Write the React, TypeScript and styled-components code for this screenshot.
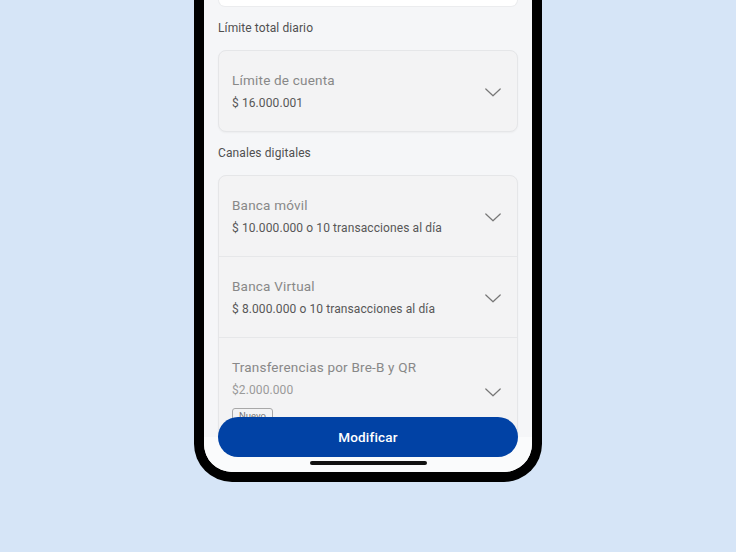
import React from "react";
import styled, { createGlobalStyle } from "styled-components";

const Global = createGlobalStyle`
  html, body { margin: 0; padding: 0; }
  body {
    background: #d6e5f7;
    font-family: Roboto, "Noto Sans", "Liberation Sans", sans-serif;
    width: 736px;
    height: 552px;
    overflow: hidden;
  }
`;

const Stage = styled.div`
  width: 736px;
  height: 552px;
  display: flex;
  justify-content: center;
  align-items: flex-start;
`;

const Phone = styled.div`
  width: 348px;
  height: 482px;
  box-sizing: border-box;
  background: #000;
  border: 10px solid #000;
  border-top: none;
  border-radius: 0 0 38px 38px;
`;

const Screen = styled.div`
  position: relative;
  width: 100%;
  height: 100%;
  background: #f5f6f8;
  border-radius: 0 0 28px 28px;
  overflow: hidden;
`;

const Content = styled.div`
  display: flex;
  flex-direction: column;
  padding: 0 14px;
`;

const TopStub = styled.div`
  height: 7px;
  background: #ffffff;
  border: 1px solid #ebecee;
  border-top: none;
  border-radius: 0 0 8px 8px;
  box-sizing: border-box;
`;

const SectionLabel = styled.div`
  font-size: 12px;
  line-height: 16px;
  color: #505050;
  margin: 13px 0 14px;
  letter-spacing: 0.1px;
`;

const Card = styled.div`
  background: #f3f3f4;
  border: 1px solid #e5e6e8;
  border-radius: 8px;
  box-shadow: 0 1px 2px rgba(0, 0, 0, 0.04);
  display: flex;
  flex-direction: column;
`;

const Row = styled.div<{ $last?: boolean }>`
  display: flex;
  align-items: center;
  justify-content: space-between;
  padding: 19px 16px 19px 13px;
  border-bottom: ${(p) => (p.$last ? "none" : "1px solid #e6e7e9")};
`;

const RowText = styled.div`
  display: flex;
  flex-direction: column;
  gap: 4px;
`;

const Title = styled.div`
  font-size: 13.5px;
  line-height: 20px;
  color: #888888;
  letter-spacing: 0.2px;
`;

const Value = styled.div<{ $muted?: boolean }>`
  font-size: 12px;
  line-height: 18px;
  color: ${(p) => (p.$muted ? "#9a9a9a" : "#575757")};
  letter-spacing: 0.1px;
`;

const Badge = styled.span`
  align-self: flex-start;
  margin-top: 5px;
  font-size: 9.5px;
  line-height: 12px;
  color: #777;
  border: 1px solid #a8a8a8;
  border-radius: 3px;
  padding: 1px 6px;
`;

const ChevronWrap = styled.div`
  display: flex;
  width: 16px;
  height: 9px;
  margin-top: 3px;
`;

const Footer = styled.div`
  position: absolute;
  left: 0;
  right: 0;
  bottom: 0;
  padding: 0 14px 15px;
  background: linear-gradient(to bottom, rgba(250, 250, 251, 0) 0 20px, #fafbfc 20px);
`;

const PrimaryButton = styled.button`
  width: 100%;
  height: 40px;
  border: none;
  border-radius: 20px;
  background: #0142a5;
  color: #ffffff;
  font-family: Roboto, "Noto Sans", sans-serif;
  font-size: 13.5px;
  font-weight: 500;
  letter-spacing: 0.2px;
`;

const HomeIndicator = styled.div`
  position: absolute;
  left: 106px;
  bottom: 7px;
  width: 117px;
  height: 4px;
  border-radius: 2px;
  background: #111;
`;

const Chevron = () => (
  <ChevronWrap>
    <svg width="16" height="9" viewBox="0 0 16 9" fill="none">
      <path d="M0.8 1 L8 7.8 L15.2 1" stroke="#777" strokeWidth="1.2" strokeLinecap="round" strokeLinejoin="round" />
    </svg>
  </ChevronWrap>
);

export default function App() {
  return (
    <>
      <Global />
      <Stage>
        <Phone>
          <Screen>
            <Content>
              <TopStub />
              <SectionLabel>Límite total diario</SectionLabel>
              <Card>
                <Row $last>
                  <RowText>
                    <Title>Límite de cuenta</Title>
                    <Value>$ 16.000.001</Value>
                  </RowText>
                  <Chevron />
                </Row>
              </Card>
              <SectionLabel>Canales digitales</SectionLabel>
              <Card>
                <Row>
                  <RowText>
                    <Title>Banca móvil</Title>
                    <Value>$ 10.000.000 o 10 transacciones al día</Value>
                  </RowText>
                  <Chevron />
                </Row>
                <Row>
                  <RowText>
                    <Title>Banca Virtual</Title>
                    <Value>$ 8.000.000 o 10 transacciones al día</Value>
                  </RowText>
                  <Chevron />
                </Row>
                <Row $last>
                  <RowText>
                    <Title>Transferencias por Bre-B y QR</Title>
                    <Value $muted>$2.000.000</Value>
                    <Badge>Nuevo</Badge>
                  </RowText>
                  <Chevron />
                </Row>
              </Card>
            </Content>
            <Footer>
              <PrimaryButton>Modificar</PrimaryButton>
            </Footer>
            <HomeIndicator />
          </Screen>
        </Phone>
      </Stage>
    </>
  );
}
